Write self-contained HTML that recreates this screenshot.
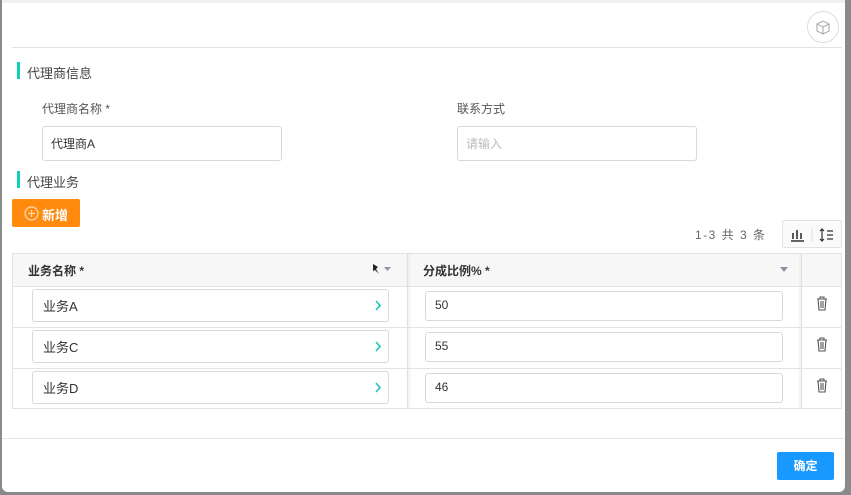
<!DOCTYPE html>
<html><head><meta charset="utf-8"><style>
*{box-sizing:border-box;margin:0;padding:0}
body{width:851px;height:495px;background:#8a8a8a;font-family:"Liberation Sans","Noto Sans CJK SC",sans-serif;color:#333;position:relative;overflow:hidden}
.modal{position:absolute;left:2px;top:0;width:843px;height:492px;background:#fff;border-radius:0 0 6px 6px}
.a{position:absolute}
.topline{left:0;top:0;width:843px;height:3px;background:#eef0f4}
.hd{left:10px;top:47px;width:830px;height:1px;background:#e3e3e3}
.cube{left:805px;top:11px;width:32px;height:32px;border:1px solid #ddd;border-radius:50%}
.bar{width:3px;height:17px;background:#10d0b8}
.sec{font-size:13px;color:#444}
.lbl{font-size:12px;color:#555}
.ta{width:240px;height:35px;border:1px solid #d9d9d9;border-radius:3px;font-size:12px;padding:8px 8px}
.btn{left:10px;top:199px;width:68px;height:28px;background:#ff8a0d;border-radius:2px;color:#fff;font-size:13px;font-weight:bold}
.tbl{left:10px;top:253px;width:830px;height:156px;border:1px solid #e3e3e3}
.th{top:0;height:33px;background:#f7f7f7;border-bottom:1px solid #e3e3e3;font-size:12px;font-weight:bold;color:#333;padding:8px 0 0 15px}
.vl{top:0;width:1px;height:155px;background:#e0e0e0}
.hl{left:0;width:828px;height:1px;background:#e3e3e3}
.in{border:1px solid #d9d9d9;border-radius:3px;font-size:13px;padding:6px 10px}
.ok{left:775px;top:452px;width:57px;height:28px;background:#1899ff;color:#fff;font-size:12px;font-weight:bold;text-align:center;line-height:28px;border-radius:2px}
.chev{position:absolute;right:7px;top:10px}
</style></head><body><div class="modal">
<div class="a topline"></div>
<div class="a cube"><svg width="30" height="30" viewBox="0 0 30 30" style="position:absolute;left:0;top:0"><path d="M15 9l6 3v7l-6 3-6-3v-7zM9 12l6 3 6-3M15 15v7" fill="none" stroke="#999" stroke-width="0.9"/></svg></div>
<div class="a hd"></div>
<div class="a bar" style="left:15px;top:62px"></div>
<div class="a sec" style="left:25px;top:63px">代理商信息</div>
<div class="a lbl" style="left:40px;top:100px">代理商名称 *</div>
<div class="a ta" style="left:40px;top:126px">代理商A</div>
<div class="a lbl" style="left:455px;top:100px">联系方式</div>
<div class="a ta" style="left:455px;top:126px;color:#bbb">请输入</div>
<div class="a bar" style="left:15px;top:171px"></div>
<div class="a sec" style="left:25px;top:172px">代理业务</div>
<div class="a btn"><svg class="a" style="left:12px;top:7px" width="15" height="15" viewBox="0 0 15 15"><circle cx="7.5" cy="7.5" r="6.5" fill="none" stroke="#ffd9b0" stroke-width="1.3"/><path d="M7.5 4v7M4 7.5h7" stroke="#ffd9b0" stroke-width="1.3"/></svg><span class="a" style="left:30px;top:6px">新增</span></div>
<div class="a" style="left:693px;top:226px;font-size:12px;color:#666;letter-spacing:1.5px">1-3 共 3 条</div>
<div class="a" style="left:780px;top:220px;width:60px;height:28px;border:1px solid #e3e3e3;border-radius:2px;background:#fafafa">
<svg width="60" height="28" viewBox="0 0 60 28"><path d="M8 20h13M10 12v6M14 9v9M18 12v6" stroke="#333" stroke-width="1.6" fill="none"/><path d="M29 7v14" stroke="#ddd"/><path d="M39 8v12M37 10l2-2 2 2M37 18l2 2 2-2M44 10h6M44 14h6M44 18h6" stroke="#333" stroke-width="1.2" fill="none"/></svg></div>
<div class="a tbl">
<div class="a th" style="left:0;width:394px">业务名称 *<svg class="a" style="right:14px;top:9px" width="22" height="12" viewBox="0 0 22 12"><path d="M2 1l5 3-2 2 3 5-4-4-2 1z" fill="#222"/><path d="M13 4h7l-3.5 4z" fill="#8a96a6"/></svg></div>
<div class="a th" style="left:394px;width:395px;padding-left:16px">分成比例% *<svg class="a" style="right:14px;top:13px" width="8" height="5" viewBox="0 0 8 5"><path d="M0 0h8L4 5z" fill="#8a96a6"/></svg></div>
<div class="a th" style="left:789px;width:39px"></div>
<div class="a vl" style="left:394px;box-shadow:1px 0 2px #ddd"></div>
<div class="a vl" style="left:788px;box-shadow:-1px 0 2px #ddd"></div>
<div class="a hl" style="top:73px"></div>
<div class="a hl" style="top:114px"></div>
<div class="a in" style="left:19px;top:35px;width:357px;height:33px">业务A<svg class="chev" width="6" height="11" viewBox="0 0 6 11"><path d="M1 1l4 4.5L1 10" fill="none" stroke="#1ec8b8" stroke-width="1.6"/></svg></div>
<div class="a in" style="left:19px;top:76px;width:357px;height:33px">业务C<svg class="chev" width="6" height="11" viewBox="0 0 6 11"><path d="M1 1l4 4.5L1 10" fill="none" stroke="#1ec8b8" stroke-width="1.6"/></svg></div>
<div class="a in" style="left:19px;top:117px;width:357px;height:33px">业务D<svg class="chev" width="6" height="11" viewBox="0 0 6 11"><path d="M1 1l4 4.5L1 10" fill="none" stroke="#1ec8b8" stroke-width="1.6"/></svg></div>
<div class="a in" style="left:412px;top:37px;width:358px;height:30px;font-size:12px;padding:6px 9px">50</div>
<div class="a in" style="left:412px;top:78px;width:358px;height:30px;font-size:12px;padding:6px 9px">55</div>
<div class="a in" style="left:412px;top:119px;width:358px;height:30px;font-size:12px;padding:6px 9px">46</div>
<svg class="a" style="left:802px;top:42px" width="14" height="100" viewBox="0 0 14 100"><g fill="none" stroke="#555" stroke-width="1.1"><path d="M2 3h10M5 3V1h4v2M3 3l1 11h6l1-11M6 5v7M8 5v7"/><path d="M2 44h10M5 44v-2h4v2M3 44l1 11h6l1-11M6 46v7M8 46v7"/><path d="M2 85h10M5 85v-2h4v2M3 85l1 11h6l1-11M6 87v7M8 87v7"/></g></svg>
</div>
<div class="a" style="left:0;top:438px;width:843px;height:1px;background:#e6e6e6"></div>
<div class="a ok">确定</div>
</div></body></html>
